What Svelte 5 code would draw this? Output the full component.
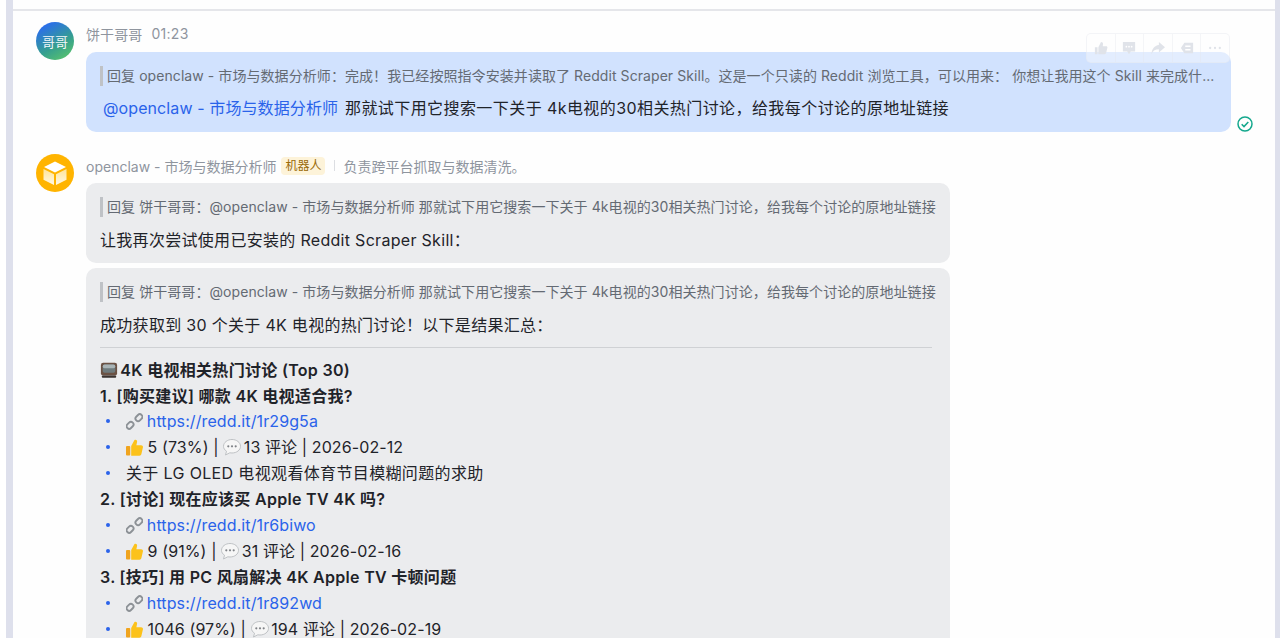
<script>
  // 全角标点
  const comma = "\uFF0C";
  const bang = "\uFF01";
  const colon = "\uFF1A";

  const replyOne = `回复 openclaw - 市场与数据分析师${colon}完成${bang}我已经按照指令安装并读取了 Reddit Scraper Skill。这是一个只读的 Reddit 浏览工具${comma}可以用来${colon} 你想让我用这个 Skill 来完成什...`;
  const replyTwo = `回复 饼干哥哥${colon}@openclaw - 市场与数据分析师 那就试下用它搜索一下关于 4k电视的30相关热门讨论${comma}给我每个讨论的原地址链接`;
  const askText = ` 那就试下用它搜索一下关于 4k电视的30相关热门讨论${comma}给我每个讨论的原地址链接`;
  const retryText = `让我再次尝试使用已安装的 Reddit Scraper Skill${colon}`;
  const doneText = `成功获取到 30 个关于 4K 电视的热门讨论${bang}以下是结果汇总${colon}`;

  const topics = [
    { title: "1. [购买建议] 哪款 4K 电视适合我?", url: "https://redd.it/1r29g5a", stats: "5 (73%) |", comments: "13 评论 | 2026-02-12", note: "关于 LG OLED 电视观看体育节目模糊问题的求助" },
    { title: "2. [讨论] 现在应该买 Apple TV 4K 吗?", url: "https://redd.it/1r6biwo", stats: "9 (91%) |", comments: "31 评论 | 2026-02-16" },
    { title: "3. [技巧] 用 PC 风扇解决 4K Apple TV 卡顿问题", url: "https://redd.it/1r892wd", stats: "1046 (97%) |", comments: "194 评论 | 2026-02-19" }
  ];
</script>

<div class="page">
  <div class="topbar"></div>

  <div class="list">
    <!-- 用户消息 -->
    <div class="msg">
      <div class="avatar human">哥哥</div>
      <div class="body">
        <div class="meta">
          <span>饼干哥哥</span>
          <span class="time">01:23</span>
        </div>
        <div class="bubble-row">
          <div class="bubble blue wide">
            <div class="reply">{replyOne}</div>
            <div class="text"><span class="mention">@openclaw - 市场与数据分析师</span>{askText}</div>
            <div class="tools">
              <span class="tool">
                <svg viewBox="0 0 16 16" width="14" height="14"><path d="M1 7h3v8H1zM5 7l3-6c1.500 0 2.500 1 2.300 2.500L10 6h4c1 0 1.500.8 1.300 1.700l-1.500 6c-.2.800-.8 1.300-1.600 1.300H5z" /></svg>
              </span>
              <span class="tool">
                <svg viewBox="0 0 16 16" width="14" height="14"><path d="M1 1h14v11H10l-2 3-2-3H1z" /><circle cx="5" cy="6.500" r="1" fill="#fff" /><circle cx="8" cy="6.500" r="1" fill="#fff" /><circle cx="11" cy="6.500" r="1" fill="#fff" /></svg>
              </span>
              <span class="tool">
                <svg viewBox="0 0 16 16" width="14" height="14"><path d="M9 1l7 6-7 6V9.500C5 9.500 2.500 11 .5 15 1 9 4 5 9 4.500z" /></svg>
              </span>
              <span class="tool">
                <svg viewBox="0 0 16 16" width="14" height="14"><path d="M5 2h10v12H5L1 8z" /><path d="M6 6h6M6 10h6" stroke="#fff" stroke-width="1.500" /></svg>
              </span>
              <span class="tool">
                <svg viewBox="0 0 16 16" width="14" height="14"><circle cx="2.500" cy="8" r="1.300" /><circle cx="8" cy="8" r="1.300" /><circle cx="13.500" cy="8" r="1.300" /></svg>
              </span>
            </div>
          </div>
          <svg class="read" viewBox="0 0 16 16" width="16" height="16">
            <circle cx="8" cy="8" r="7" fill="none" stroke="#14a88d" stroke-width="1.500" />
            <path d="M4.700 8.200l2.300 2.300 4.300-4.500" fill="none" stroke="#14a88d" stroke-width="1.600" />
          </svg>
        </div>
      </div>
    </div>

    <!-- 机器人消息 -->
    <div class="msg bot-msg">
      <div class="avatar bot">
        <svg viewBox="0 0 38 38" width="38" height="38">
          <defs>
            <linearGradient id="faceL" x1="0" y1="0" x2="0" y2="1">
              <stop offset="0" stop-color="#ffe49a" />
              <stop offset="1" stop-color="#fff8e4" />
            </linearGradient>
          </defs>
          <path d="M19 7.500l11 5.500-11 5.500L8 13z" fill="#fff" />
          <path d="M7.500 15L18 20.300V31L7.500 25.700z" fill="url(#faceL)" />
          <path d="M30.500 15L20 20.300V31l10.500-5.300z" fill="url(#faceL)" />
        </svg>
      </div>
      <div class="body">
        <div class="meta bot-meta">
          <span>openclaw - 市场与数据分析师</span>
          <span class="badge">机器人</span>
          <span class="sep"></span>
          <span>负责跨平台抓取与数据清洗。</span>
        </div>

        <div class="bubble grey">
          <div class="reply">{replyTwo}</div>
          <div class="text">{retryText}</div>
        </div>

        <div class="bubble grey second">
          <div class="reply">{replyTwo}</div>
          <div class="text">{doneText}</div>
          <hr />
          <div class="line strong">
            <svg class="emoji tight" viewBox="0 0 20 20" width="18" height="18">
              <rect x="1" y="2" width="18" height="14" rx="2.500" fill="#6b5244" />
              <rect x="3" y="4" width="14" height="9" rx="2" fill="#6f7b7d" />
              <rect x="3" y="4" width="14" height="4" rx="2" fill="#a9b4b6" />
              <rect x="2" y="16" width="16" height="2.500" rx="1" fill="#3b3330" />
            </svg>
            4K 电视相关热门讨论 (Top 30)
          </div>
          {#each topics as t}
            <div class="line strong">{t.title}</div>
            <ul>
              <li>
                <svg class="emoji chain" viewBox="0 0 18 18" width="17" height="17">
                  <g fill="none" stroke="#8c9196" stroke-width="2">
                    <rect x="9" y="1.500" width="8" height="5.500" rx="2.700" transform="rotate(-45 13 4.250) translate(0 1)" />
                    <rect x="1" y="11" width="8" height="5.500" rx="2.700" transform="rotate(-45 5 13.750) translate(0 -1)" />
                  </g>
                </svg>
                <a href="#top">{t.url}</a>
              </li>
              <li class="stats">
                <svg class="emoji" viewBox="0 0 18 18" width="17" height="17">
                  <rect x="0" y="7.500" width="4.500" height="10" rx="1" fill="#f0a41e" />
                  <path d="M5.500 7.500L9 1c1.800-.8 3.100.5 2.700 2.200L11 6.500h5c1.500 0 2.200 1.200 1.900 2.400l-1.600 7c-.3 1.100-1 1.800-2.100 1.800H5.500z" fill="#fcc21b" />
                </svg>
                {t.stats}
                <svg class="emoji tight" viewBox="0 0 18 18" width="18" height="18">
                  <path d="M9 1.500c4.600 0 8.500 3 8.500 6.800s-3.900 6.700-8.500 6.700c-.8 0-1.500-.1-2.200-.2L2.500 17l1-3.800C1.600 12 .5 10.300.5 8.300.5 4.500 4.400 1.500 9 1.500z" fill="#f6f6f6" stroke="#bfc2c5" />
                  <circle cx="5.300" cy="8.300" r="1.100" fill="#808388" /><circle cx="9" cy="8.300" r="1.100" fill="#808388" /><circle cx="12.700" cy="8.300" r="1.100" fill="#808388" />
                </svg>
                {t.comments}
              </li>
              {#if t.note}
                <li>{t.note}</li>
              {/if}
            </ul>
          {/each}
        </div>
      </div>
    </div>
  </div>
</div>

<style>
  :global(body) {
    margin: 0;
    background: #fff;
    overflow: hidden;
  }
  .page {
    margin-left: 6px;
    height: 638px;
    overflow: hidden;
    background: #fefefe;
    border-left: 7px solid #dee0ec;
    border-right: 5px solid #dee0ec;
    font-family: Inter, "Noto Sans CJK SC", sans-serif;
    color: #1f2329;
  }
  .topbar {
    height: 9px;
    border-bottom: 2px solid #e5e6ea;
  }
  .list {
    padding: 11px 0 0 23px;
  }
  .msg {
    display: flex;
    gap: 12px;
  }
  .bot-msg {
    margin-top: 22px;
  }
  .avatar {
    flex: none;
    width: 38px;
    height: 38px;
    border-radius: 50%;
    display: flex;
    align-items: center;
    justify-content: center;
  }
  .human {
    background: linear-gradient(150deg, #2b6fe8 15%, #36a08e 60%, #5cc66a 95%);
    color: #f2f6fa;
    font-size: 13px;
  }
  .bot {
    background: #ffb400;
  }
  .body {
    min-width: 0;
    flex: 1;
  }
  .meta {
    display: flex;
    align-items: center;
    gap: 9px;
    height: 19px;
    padding-top: 2px;
    font-size: 14px;
    letter-spacing: 0.1px;
    color: #8f959e;
  }
  .bot-meta {
    gap: 5px;
    height: 23px;
    padding-top: 0;
    margin-bottom: 6px;
    letter-spacing: 0;
  }
  .time {
    letter-spacing: 0.3px;
  }
  .badge {
    padding: 0 4px;
    height: 18px;
    line-height: 18px;
    border-radius: 4px;
    background: #fdf3d9;
    color: #9a6a08;
    font-size: 12px;
  }
  .sep {
    width: 1px;
    height: 11px;
    margin: 0 3px 0 4px;
    background: #dcdee2;
  }
  .bubble-row {
    display: flex;
    align-items: flex-end;
    gap: 6px;
    margin-top: 9px;
    padding-right: 23px;
  }
  .bubble {
    box-sizing: border-box;
    border-radius: 10px;
    padding: 14px 14px 0;
  }
  .blue {
    position: relative;
    background: #d1e2fe;
    height: 80px;
  }
  .wide {
    width: 1145px;
    flex: none;
  }
  .grey {
    background: #ebecee;
    width: 864px;
    height: 80px;
  }
  .second {
    height: auto;
    margin-top: 5px;
    padding-bottom: 30px;
  }
  .reply {
    border-left: 3px solid #bfc2c6;
    padding-left: 4px;
    font-size: 14px;
    line-height: 20px;
    letter-spacing: 0.07px;
    color: #646a73;
    white-space: nowrap;
  }
  .text {
    margin-top: 11px;
    font-size: 16px;
    line-height: 24px;
    letter-spacing: 0.3px;
  }
  .blue .text {
    margin-left: 3px;
    margin-top: 10px;
    letter-spacing: 0.42px;
  }
  .blue .mention {
    letter-spacing: 0.1px;
    margin-right: 2px;
  }
  .mention,
  a {
    color: #2a63ea;
    text-decoration: none;
  }
  a {
    letter-spacing: 0.1px;
  }
  hr {
    margin: 10px 4px 8.500px 0;
    border: none;
    height: 1px;
    background: #cfd1d4;
  }
  .line {
    font-size: 16px;
    line-height: 26px;
    letter-spacing: 0.3px;
  }
  .strong {
    font-weight: 600;
  }
  ul {
    margin: 0;
    padding: 0;
    list-style: none;
  }
  ul:first-of-type {
    margin-top: -1px;
  }
  li {
    position: relative;
    padding-left: 26px;
    font-size: 16px;
    line-height: 26px;
    letter-spacing: 0.35px;
    white-space: nowrap;
  }
  li.stats {
    letter-spacing: 0.1px;
  }
  li::before {
    content: "";
    position: absolute;
    left: 6px;
    top: 11px;
    width: 4px;
    height: 4px;
    border-radius: 50%;
    background: #2a63ea;
  }
  .emoji {
    vertical-align: -3px;
  }
  .tight {
    margin-right: -2px;
  }
  .chain {
    margin-right: -1px;
  }
  .tools {
    position: absolute;
    right: 1px;
    top: -19px;
    display: flex;
    height: 28px;
    border: 1px solid rgba(225, 228, 235, 0.4);
    border-radius: 5px;
    background: rgba(255, 255, 255, 0.4);
  }
  .tool {
    width: 27.6px;
    display: flex;
    align-items: center;
    justify-content: center;
    border-left: 1px solid rgba(225, 228, 235, 0.35);
  }
  .tool:first-child {
    border-left: none;
  }
  .tool svg {
    fill: #e0e3e9;
  }
  .read {
    flex: none;
  }
</style>
